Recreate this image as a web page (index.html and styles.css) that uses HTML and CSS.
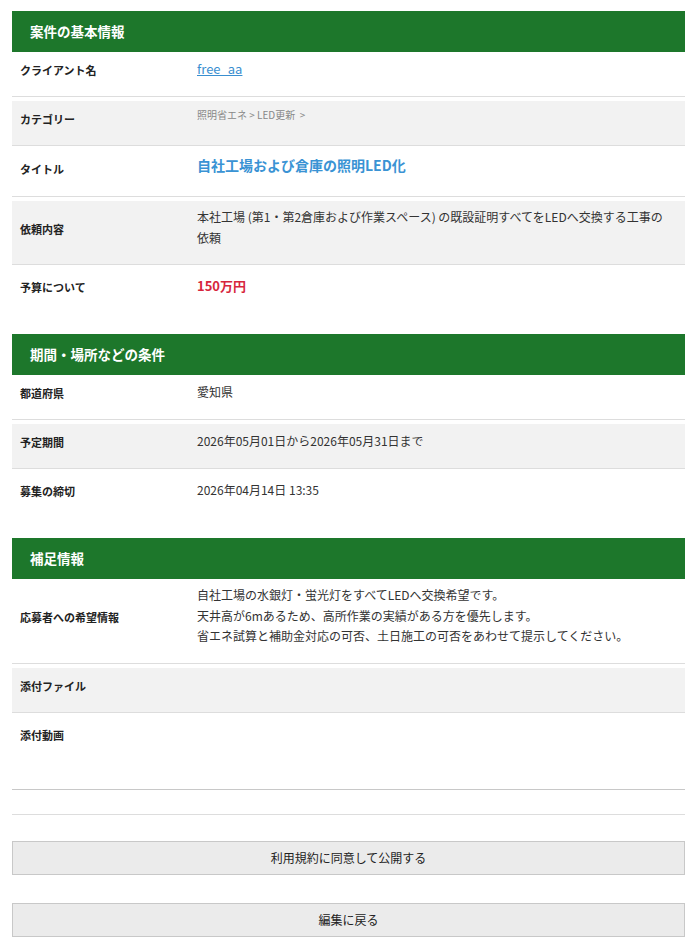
FILE: index.html
```html
<!DOCTYPE html>
<html lang="ja">
<head>
  <meta charset="UTF-8">
  <meta name="viewport" content="width=device-width, initial-scale=1.0">
  <title>案件の確認</title>
  <link rel="stylesheet" href="styles.css">
</head>
<body>
  <div class="confirm">
    <section class="block">
      <h2 class="block-title">案件の基本情報</h2>
      <div class="row">
        <div class="row-label">クライアント名</div>
        <div class="row-value"><a href="#" class="client-link">free_aa</a></div>
      </div>
      <div class="row alt">
        <div class="row-label">カテゴリー</div>
        <div class="row-value category">照明省エネ &gt; LED更新 &nbsp;&gt;</div>
      </div>
      <div class="row title-row">
        <div class="row-label">タイトル</div>
        <div class="row-value job-title">自社工場および倉庫の照明LED化</div>
      </div>
      <div class="row alt">
        <div class="row-label">依頼内容</div>
        <div class="row-value">本社工場 (第1・第2倉庫および作業スペース) の既設証明すべてをLEDへ交換する工事の依頼</div>
      </div>
      <div class="row last">
        <div class="row-label">予算について</div>
        <div class="row-value budget">150万円</div>
      </div>
    </section>

    <section class="block">
      <h2 class="block-title">期間・場所などの条件</h2>
      <div class="row">
        <div class="row-label">都道府県</div>
        <div class="row-value">愛知県</div>
      </div>
      <div class="row alt">
        <div class="row-label">予定期間</div>
        <div class="row-value">2026年05月01日から2026年05月31日まで</div>
      </div>
      <div class="row last">
        <div class="row-label">募集の締切</div>
        <div class="row-value">2026年04月14日 13:35</div>
      </div>
    </section>

    <section class="block">
      <h2 class="block-title">補足情報</h2>
      <div class="row">
        <div class="row-label">応募者への希望情報</div>
        <div class="row-value">
          自社工場の水銀灯・蛍光灯をすべてLEDへ交換希望です。<br>
          天井高が6mあるため、高所作業の実績がある方を優先します。<br>
          省エネ試算と補助金対応の可否、土日施工の可否をあわせて提示してください。
        </div>
      </div>
      <div class="row alt">
        <div class="row-label">添付ファイル</div>
        <div class="row-value"></div>
      </div>
      <div class="row movie">
        <div class="row-label">添付動画</div>
        <div class="row-value"></div>
      </div>
      <div class="spacer"></div>
    </section>

    <div class="actions">
      <button type="button" class="btn">利用規約に同意して公開する</button>
      <button type="button" class="btn">編集に戻る</button>
    </div>
  </div>
</body>
</html>
```

FILE: styles.css
```css
body {
  margin: 0;
  font-family: "Noto Sans CJK JP", "Liberation Sans", sans-serif;
  background-color: #fff;
  color: #333;
}
.confirm {
  padding: 11px 10px 0 12px;
}
.block {
  margin-bottom: 21px;
}
.block-title {
  margin: 0;
  background-color: #1d772b;
  color: #fff;
  font-size: 13.5px;
  font-weight: bold;
  height: 41px;
  line-height: 41px;
  padding-left: 18px;
}
.row {
  display: grid;
  grid-template-columns: 177px 1fr;
  align-items: center;
  border-bottom: 1px solid #ddd;
  margin-top: 4px;
}
.block-title + .row {
  margin-top: 0;
}
.row.alt {
  background-color: #f2f2f2;
}
.row.last {
  border-bottom: none;
}
.row.title-row {
  min-height: 46px;
}
.row-label {
  font-size: 11px;
  font-weight: bold;
  color: #222;
  padding: 8px 8px 16px;
  line-height: 20px;
}
.row-value {
  font-size: 12px;
  line-height: 20.5px;
  padding: 6px 20px 16px 8px;
  color: #333;
}
.client-link {
  color: #3a8fd0;
  font-size: 13px;
}
.category {
  font-size: 10px;
  color: #888;
  align-self: start;
  padding-top: 4px;
}
.job-title {
  font-size: 14px;
  font-weight: bold;
  color: #3a93d4;
  align-self: start;
  padding-top: 5px;
  padding-bottom: 0;
}
.budget {
  font-size: 13px;
  font-weight: bold;
  color: #d7263d;
}
.row.movie {
  height: 72px;
  align-items: start;
  border-bottom-color: #c8c8c8;
}
.spacer {
  height: 20px;
  margin-top: 4px;
  border-bottom: 1px solid #ddd;
}
.actions {
  display: flex;
  flex-direction: column;
  gap: 28px;
  padding-top: 5px;
}
.btn {
  display: block;
  width: 100%;
  height: 34px;
  background-color: #ebebeb;
  border: 1px solid #c8c8c8;
  font-family: inherit;
  font-size: 12px;
  color: #222;
  cursor: pointer;
}
.btn:hover {
  background-color: #e0e0e0;
}
```
